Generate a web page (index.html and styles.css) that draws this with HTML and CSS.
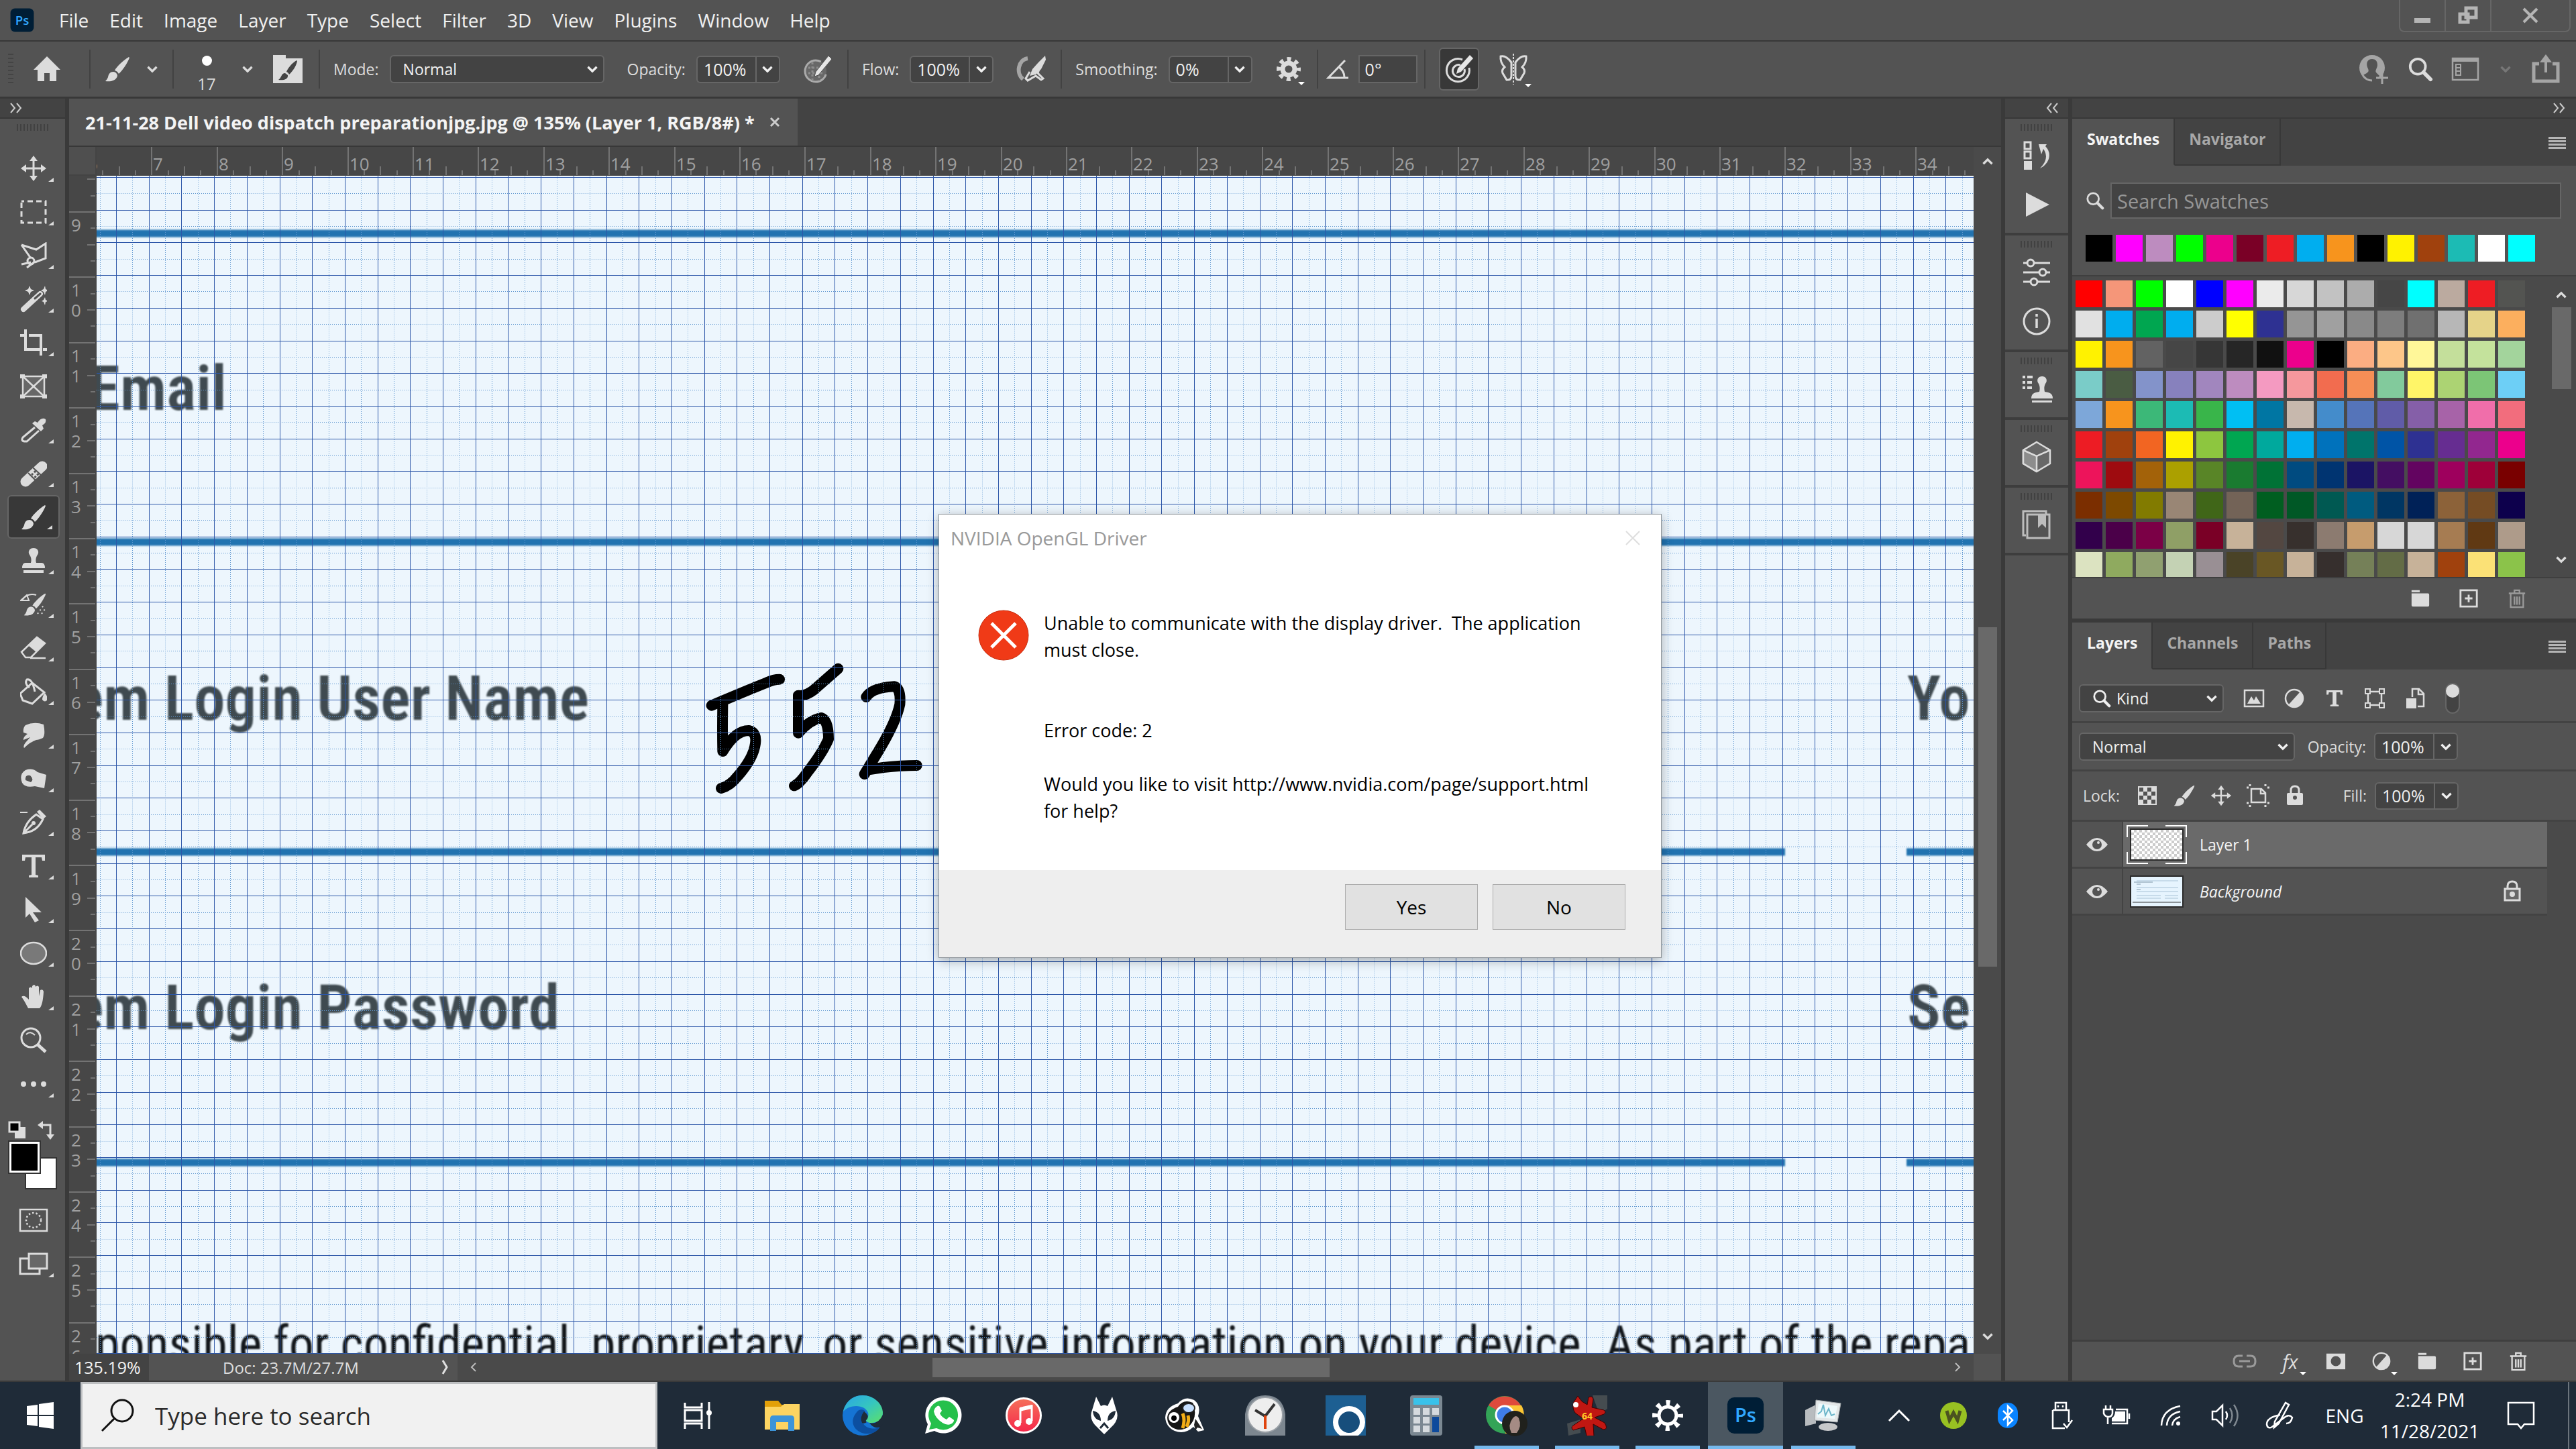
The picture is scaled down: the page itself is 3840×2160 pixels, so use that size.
FILE: index.html
```html
<!DOCTYPE html>
<html lang="en">
  <head>
    <meta charset="UTF-8" />
    <meta name="viewport" content="width=device-width, initial-scale=1.0" />
    <title>21-11-28 Dell video dispatch preparationjpg.jpg @ 135%</title>
    <link rel="stylesheet" href="styles.css">
  </head>
  <body>
    <!-- shared icons -->
    <svg class="sprite" aria-hidden="true">
      <symbol id="chevron" viewBox="0 0 22 22"><path d="M5 8l6 6 6-6" fill="none" stroke="currentColor" stroke-width="3"/></symbol>
      <symbol id="search" viewBox="0 0 40 40"><circle cx="16" cy="16" r="12" fill="none" stroke="currentColor" stroke-width="4"/><path d="M25 25l11 11" stroke="currentColor" stroke-width="6" stroke-linecap="round"/></symbol>
      <symbol id="brush" viewBox="0 0 40 40"><path d="M37 2C30 6 19 16 16 22q4 1 6 5C28 22 36 9 38 3z" fill="currentColor"/><path d="M14 24c-5 0-7 3-8 8-1 3-3 5-4 6 7 1 16 0 18-8 0-3-3-6-6-6z" fill="currentColor"/></symbol>
      <symbol id="folder" viewBox="0 0 32 32"><path d="M2 3h13v3H2zM2 8h26q2 0 2 2v17q0 2-2 2H4q-2 0-2-2z" fill="currentColor"/></symbol>
      <symbol id="plus" viewBox="0 0 32 32"><path d="M3 3h26v26H3zM16 10v12M10 16h12" fill="none" stroke="currentColor" stroke-width="3"/></symbol>
      <symbol id="trash" viewBox="0 0 32 32"><path d="M3 8h26M12 7V3h8v4M6 8v22h20V8M12 13v13M16 13v13M20 13v13" fill="none" stroke="currentColor" stroke-width="2.5"/></symbol>
      <symbol id="adjust" viewBox="0 0 32 32"><circle cx="16" cy="16" r="13" fill="none" stroke="currentColor" stroke-width="2.5"/><path d="M25 6A13 13 0 0 1 7 26z" fill="currentColor"/></symbol>
      <symbol id="move" viewBox="0 0 40 40"><path d="M20 6v28M6 20h28" stroke="currentColor" stroke-width="3"/><path d="M20 1l6 8H14zM20 39l6-8H14zM1 20l8-6v12zM39 20l-8-6v12z" fill="currentColor"/></symbol>
      <symbol id="eye" viewBox="0 0 34 24"><path d="M1 12Q9 2 17 2t16 10Q25 22 17 22T1 12z" fill="currentColor"/><circle cx="17" cy="12" r="7" fill="#535353"/><circle cx="19" cy="9" r="2" fill="currentColor"/></symbol>
      <symbol id="ps" viewBox="0 0 60 60"><rect x="1" y="1" width="58" height="58" rx="11" fill="#001e36"/><text x="30" y="41" text-anchor="middle" font-family="Open Sans, sans-serif" font-weight="600" font-size="31" fill="#31a8ff">Ps</text></symbol>
    </svg>

    <header class="menubar">
      <svg class="menubar__logo"><use href="#ps"/></svg>
      <nav class="menubar__items">
        <button>File</button><button>Edit</button><button>Image</button><button>Layer</button><button>Type</button><button>Select</button><button>Filter</button><button>3D</button><button>View</button><button>Plugins</button><button>Window</button><button>Help</button>
      </nav>
      <div class="window-controls">
        <button class="window-controls__button" aria-label="Minimize"><svg width="28" height="28"><path d="M2 18h24v7H2z" fill="#b5b5b5"/></svg></button>
        <button class="window-controls__button" aria-label="Restore"><svg width="32" height="28"><path d="M13 3h15v14H13zM4 12h12v12H4z" fill="#535353" stroke="#b5b5b5" stroke-width="5"/></svg></button>
        <button class="window-controls__button window-controls__button--wide" aria-label="Close"><svg width="28" height="24"><path d="M4 2l20 20M24 2L4 22" stroke="#b5b5b5" stroke-width="4"/></svg></button>
      </div>
    </header>

    <section class="options">
      <div class="options__group options__group--home">
        <span class="options__grip"></span>
        <button aria-label="Home"><svg width="44" height="44" viewBox="0 0 44 44"><path d="M22 3L2 23h6v17h10V28h8v12h10V23h6z" fill="#dcdcdc"/></svg></button>
      </div>
      <div class="options__group">
        <button aria-label="Brush tool"><svg width="40" height="40"><use href="#brush"/></svg></button>
        <svg class="chevron"><use href="#chevron"/></svg>
      </div>
      <div class="options__group">
        <div class="brush-size"><i class="brush-size__dot"></i><span>17</span></div>
        <svg class="chevron"><use href="#chevron"/></svg>
        <button class="options__preset" aria-label="Brush settings"><svg width="44" height="44" viewBox="0 0 44 44"><path d="M0 1h19v5h25v37H0z" fill="#dcdcdc"/><path d="M35 9c-7 4-13 12-15 17q3 1 4 4c6-5 11-14 12-20z" fill="#444"/><path d="M18 28c-6 0-5 7-10 10 6 1 15 0 14-7z" fill="#444"/></svg></button>
      </div>
      <div class="options__group options__group--fields">
        <div class="field"><label for="mode">Mode:</label>
          <div class="select select--mode"><select id="mode"><option>Normal</option></select><svg class="chevron"><use href="#chevron"/></svg></div></div>
        <div class="field"><label for="opacity">Opacity:</label>
          <div class="combo"><input id="opacity" type="text" value="100%"><button aria-label="Opacity slider"><svg class="chevron"><use href="#chevron"/></svg></button></div></div>
        <button aria-label="Pressure for opacity"><svg width="44" height="44" viewBox="0 0 44 44"><circle cx="19" cy="25" r="16" fill="#686868" stroke="#aaa" stroke-width="3" stroke-dasharray="78 23" stroke-dashoffset="-5"/><path d="M8 20h22M8 28h22M14 12v26M24 20v20" stroke="#8d8d8d" stroke-width="3" stroke-dasharray="3 3"/><path d="M38 2l5 5-20 24-6 2 2-7z" fill="#e6e6e6" stroke="#535353"/></svg></button>
      </div>
      <div class="options__group options__group--fields">
        <div class="field"><label for="flow">Flow:</label>
          <div class="combo"><input id="flow" type="text" value="100%"><button aria-label="Flow slider"><svg class="chevron"><use href="#chevron"/></svg></button></div></div>
        <button aria-label="Airbrush"><svg width="44" height="44" viewBox="0 0 44 44"><path d="M17 6C3 8-1 28 10 37" fill="none" stroke="#a5a5a5" stroke-width="6"/><path d="M34 22l-2 6 8 8-3 2-8-6-12 7-3-3 6-10" fill="none" stroke="#dcdcdc" stroke-width="3"/><path d="M43 2l1 6-7 14-8 8-9 2 4-10 9-10z" fill="#dcdcdc"/></svg></button>
      </div>
      <div class="options__group options__group--fields">
        <div class="field"><label for="smoothing">Smoothing:</label>
          <div class="combo"><input id="smoothing" type="text" value="0%"><button aria-label="Smoothing slider"><svg class="chevron"><use href="#chevron"/></svg></button></div></div>
        <button class="has-menu" aria-label="Smoothing options"><svg width="40" height="40" viewBox="0 0 40 40"><circle cx="20" cy="20" r="9" fill="none" stroke="#dcdcdc" stroke-width="7"/><circle cx="20" cy="20" r="15" fill="none" stroke="#dcdcdc" stroke-width="6" stroke-dasharray="6 5.8" stroke-dashoffset="3"/></svg></button>
      </div>
      <div class="options__group options__group--angle">
        <svg width="36" height="36" viewBox="0 0 36 36"><path d="M28 5L3 31h30M19 15q8 6 8 15" fill="none" stroke="#dcdcdc" stroke-width="3"/></svg>
        <input class="angle" type="text" value="0°" aria-label="Brush angle">
      </div>
      <div class="options__group options__group--last">
        <button class="options__active" aria-label="Pressure for size"><svg width="44" height="44" viewBox="0 0 44 44"><path d="M27 8A17 17 0 1 0 37 20M24 16a9 9 0 1 0 6 6" fill="none" stroke="#dcdcdc" stroke-width="3"/><path d="M38 1l5 5-18 20-7 3 2-8z" fill="#e6e6e6"/></svg></button>
        <button class="has-menu" aria-label="Symmetry"><svg width="46" height="46" viewBox="0 0 46 46"><path d="M20 13Q12 2 4 4q-1 9 6 16-5 4-3 9l6 10q7 1 7-6zM26 13Q34 2 42 4q1 9-6 16 5 4 3 9l-6 10q-7 1-7-6z" fill="none" stroke="#dcdcdc" stroke-width="3"/><path d="M23 0v46" stroke="#dcdcdc" stroke-width="2" stroke-dasharray="3 2"/></svg></button>
      </div>
      <div class="options__right">
        <button aria-label="Invite"><svg width="46" height="46" viewBox="0 0 46 46"><circle cx="20" cy="21" r="19" fill="#a5a5a5"/><path d="M20 8c-7 0-9 6-7 12 2 5 3 6-1 9l-7 4 4 8 16 4 6-12-5-5c-2-3 2-7 2-11 0-6-3-9-8-9z" fill="#535353"/><path d="M20 40q-9 0-14-8" fill="none" stroke="#a5a5a5" stroke-width="3"/><path d="M35 27v18M26 36h18" stroke="#a5a5a5" stroke-width="3"/></svg></button>
        <button aria-label="Search"><svg width="38" height="38"><use href="#search"/></svg></button>
        <button aria-label="Workspace"><svg width="42" height="36" viewBox="0 0 42 36"><path d="M2 2h38v32H2z" fill="none" stroke="#a5a5a5" stroke-width="2.5"/><path d="M1 1h40v6H1z" fill="#a5a5a5"/><path d="M7 11h7v16H7zM7 16h7M7 21h7" fill="none" stroke="#a5a5a5" stroke-width="2"/></svg></button>
        <svg class="chevron chevron--dim"><use href="#chevron"/></svg>
        <button aria-label="Share"><svg width="42" height="44" viewBox="0 0 42 44"><path d="M11 14H3v26h36V14h-8" fill="none" stroke="#a5a5a5" stroke-width="5"/><path d="M21 27V8" stroke="#a5a5a5" stroke-width="4"/><path d="M21 0l9 12H12z" fill="#a5a5a5"/></svg></button>
      </div>
    </section>

    <main class="workspace">
      <aside class="toolbox">
        <div class="dock-head dock-head--left"><svg width="22" height="18" viewBox="0 0 22 18"><path d="M3 2l6 7-6 7M12 2l6 7-6 7" fill="none" stroke="#ccc" stroke-width="2"/></svg></div>
        <div class="grip"></div>
        <div class="toolbox__tools">
          <button class="tool" aria-label="Move"><svg class="tool__icon"><use href="#move"/></svg></button>
          <button class="tool" aria-label="Marquee"><svg class="tool__icon" viewBox="0 0 40 40"><rect x="2" y="4" width="36" height="32" fill="none" stroke="currentColor" stroke-width="3" stroke-dasharray="8 5" stroke-dashoffset="4"/></svg></button>
          <button class="tool" aria-label="Lasso"><svg class="tool__icon" viewBox="0 0 40 40"><path d="M2 4l22 7L38 2v22l-16 6M2 4l14 20M2 33l14-3M10 38l12-9" fill="none" stroke="currentColor" stroke-width="3"/><circle cx="16" cy="28" r="5" fill="none" stroke="currentColor" stroke-width="3"/></svg></button>
          <button class="tool" aria-label="Magic wand"><svg class="tool__icon" viewBox="0 0 40 40"><path d="M5 35L30 12" stroke="currentColor" stroke-width="8" stroke-linecap="round"/><path d="M22 19l8-7" stroke="#535353" stroke-width="3" stroke-linecap="round"/><path d="M14 0l2 5 5 2-5 2-2 5-2-5-5-2 5-2zM37 0l1 5 4 2-4 2-1 5-2-5-4-2 4-2zM37 17l1 4 4 2-4 1-1 5-2-5-3-1 3-2z" fill="currentColor"/></svg></button>
          <button class="tool" aria-label="Crop"><svg class="tool__icon" viewBox="0 0 40 40"><path d="M0 9h6M8 0v30h22M13 9h18v30M34 30h8" fill="none" stroke="currentColor" stroke-width="4"/></svg></button>
          <button class="tool tool--plain" aria-label="Frame"><svg class="tool__icon" viewBox="0 0 40 40"><path d="M4 5h32v30H4zM4 5l32 30M36 5L4 35" fill="#686868" stroke="currentColor" stroke-width="2.5"/><path d="M0 2h7v6H0zM33 2h7v6h-7zM0 32h7v6H0zM33 32h7v6h-7z" fill="currentColor"/></svg></button>
          <button class="tool" aria-label="Eyedropper"><svg class="tool__icon" viewBox="0 0 40 40"><path d="M22 16L4 31q-3 5 2 6h4l18-16" fill="none" stroke="currentColor" stroke-width="3"/><path d="M18 10l4-3 4 2q6-9 12-5 2 5-5 9l2 5-4 4z" fill="currentColor"/></svg></button>
          <button class="tool" aria-label="Healing brush"><svg class="tool__icon" viewBox="0 0 40 40"><path d="M8 32L33 9" stroke="currentColor" stroke-width="15" stroke-linecap="round"/><path d="M12 19l12 12M19 11l13 12" stroke="#535353" stroke-width="2"/><path d="M17 20l9 8M21 16l8 8" stroke="#535353" stroke-width="3" stroke-dasharray="3 3"/></svg></button>
          <button class="tool tool--active" aria-label="Brush"><svg class="tool__icon"><use href="#brush"/></svg></button>
          <button class="tool" aria-label="Clone stamp"><svg class="tool__icon" viewBox="0 0 40 40"><path d="M20 1c-6 0-9 5-6 10 3 4 3 9 2 12H8q-5 0-5 8h34q0-8-5-8h-8c-1-3-1-8 2-12 3-5 0-10-6-10zM5 34h30v4H5z" fill="currentColor"/></svg></button>
          <button class="tool" aria-label="History brush"><svg class="tool__icon"><use href="#brush" x="4" y="2" width="36" height="36"/><path d="M3 13Q12 2 24 6M1 14l9-8 3 8z" fill="none" stroke="currentColor" stroke-width="2"/><path d="M26 34l10-14M32 34l5-7" stroke="currentColor" stroke-width="2" stroke-dasharray="2 4"/></svg></button>
          <button class="tool" aria-label="Eraser"><svg class="tool__icon" viewBox="0 0 40 40"><path d="M2 26L25 4l12 9-21 21H8z" fill="none" stroke="currentColor" stroke-width="2.5"/><path d="M13 17L25 4l12 9-13 13z" fill="currentColor"/><path d="M15 35h23" stroke="currentColor" stroke-width="2.5"/></svg></button>
          <button class="tool" aria-label="Paint bucket"><svg class="tool__icon" viewBox="0 0 40 40"><path d="M0 23L18 7l18 14-18 17-14-5zM22 20Q18 0 10 2q-4 6 4 12" fill="none" stroke="currentColor" stroke-width="3"/><path d="M37 22q5 7 4 10-4 5-8 0 0-5 4-10z" fill="currentColor"/></svg></button>
          <button class="tool" aria-label="Smudge"><svg class="tool__icon" viewBox="0 0 40 40"><path d="M8 5q13-6 27-1 3 15-1 20-6 3-10 3-9 3-18 12-2-3 2-8l7-8-10 4q-1-4 6-9l-6-2q-1-7 3-11z" fill="currentColor"/></svg></button>
          <button class="tool" aria-label="Burn"><svg class="tool__icon" viewBox="0 0 40 40"><path d="M3 26Q-2 13 8 7q10-4 18 3l13 4-3 20-14-3q-14 3-19-5z" fill="currentColor"/><path d="M8 22q-1-9 7-7 6 6 1 10z" fill="#535353"/></svg></button>
          <button class="tool" aria-label="Pen"><svg class="tool__icon" viewBox="0 0 40 40"><path d="M5 36q3-17 19-28l10 7q-8 17-24 20zM5 36l13-13" fill="none" stroke="currentColor" stroke-width="3"/><circle cx="20" cy="21" r="3" fill="currentColor"/><path d="M25 4l4-3 10 10-5 4z" fill="currentColor"/><path d="M0 5h11" stroke="currentColor" stroke-width="2"/></svg></button>
          <button class="tool" aria-label="Type"><svg class="tool__icon" viewBox="0 0 40 40"><path d="M3 3h34v9h-4l-1-5h-9v26l4 1v3H13v-3l4-1V7H8l-1 5H3z" fill="currentColor"/></svg></button>
          <button class="tool" aria-label="Path selection"><svg class="tool__icon" viewBox="0 0 40 40"><path d="M8 1l24 23H19l9 12-6 3-8-13-6 6z" fill="currentColor"/></svg></button>
          <button class="tool" aria-label="Ellipse"><svg class="tool__icon" viewBox="0 0 40 40"><ellipse cx="20" cy="20" rx="19" ry="16" fill="#797979" stroke="currentColor" stroke-width="2.5"/></svg></button>
          <button class="tool" aria-label="Hand"><svg class="tool__icon" viewBox="0 0 40 40"><path d="M12 37Q6 25 2 20q4-4 11 4V7q3-3 5 0v12V4q3-4 5 0v14V5q3-3 5 0v14l2-9q4-2 5 2-1 20-6 25z" fill="currentColor"/></svg></button>
          <button class="tool tool--plain" aria-label="Zoom"><svg class="tool__icon" viewBox="0 0 40 40"><circle cx="16" cy="16" r="14" fill="none" stroke="currentColor" stroke-width="3"/><path d="M9 11q6-6 13 1" fill="none" stroke="currentColor" stroke-width="2"/><path d="M26 26l12 11" stroke="currentColor" stroke-width="5"/></svg></button>
          <button class="tool" aria-label="More tools"><svg class="tool__icon" viewBox="0 0 40 40"><g fill="currentColor"><circle cx="5" cy="20" r="4"/><circle cx="20" cy="20" r="4"/><circle cx="35" cy="20" r="4"/></g></svg></button>
        </div>
        <svg class="toolbox__colors" viewBox="0 0 96 120">
          <path d="M22 16h16v17H22z" fill="#ddd"/><path d="M14 9h15v14H14z" fill="#000" stroke="#ddd" stroke-width="3"/>
          <path d="M62 13h13v16" fill="none" stroke="#ddd" stroke-width="3"/><path d="M56 13l8-6v12zM75 35l-6-8h12z" fill="#ddd"/>
          <path d="M38 62h46v46H38z" fill="#fff" stroke="#333" stroke-width="2"/>
          <path d="M13 37h47v48H13z" fill="#fff" stroke="#333" stroke-width="2"/><path d="M17 41h39v40H17z" fill="#000"/>
        </svg>
        <button class="tool tool--plain" aria-label="Quick mask"><svg width="44" height="36" viewBox="0 0 44 36"><path d="M2 2h40v32H2z" fill="none" stroke="currentColor" stroke-width="2.5"/><circle cx="22" cy="18" r="11" fill="none" stroke="currentColor" stroke-width="2.5" stroke-dasharray="2.5 3"/></svg></button>
        <button class="tool" aria-label="Screen mode"><svg width="44" height="36" viewBox="0 0 44 36"><path d="M14 10H2v23h29v-8" fill="none" stroke="currentColor" stroke-width="3"/><path d="M15 3h27v22H15z" fill="#686868" stroke="currentColor" stroke-width="3"/></svg></button>
      </aside>

      <section class="document">
        <div class="document__tabs">
          <div class="document__tab"><span>21-11-28 Dell video dispatch preparationjpg.jpg @ 135% (Layer 1, RGB/8#) *</span>
            <button aria-label="Close document"><svg width="16" height="16"><path d="M2 2l12 12M14 2L2 14" stroke="#ccc" stroke-width="3"/></svg></button></div>
        </div>
        <div class="document__body">
          <div class="ruler-corner"></div>
          <svg class="ruler ruler--top" id="ruler-top"></svg>
          <div class="scroll-up"><svg class="chevron chevron--up"><use href="#chevron"/></svg></div>
          <svg class="ruler ruler--left" id="ruler-left"></svg>
          <svg class="canvas">
            <g transform="translate(-144 -262)">
              <g class="canvas__rules">
                <path d="M134 348H2960M134 808H2960M134 1270H2661M2842 1270H2960M134 1733H2661M2842 1733H2960"/>
              </g>
              <g class="canvas__heading">
                <text x="338" y="611" text-anchor="end">Email</text>
                <text x="878" y="1073" text-anchor="end">em Login User Name</text>
                <text x="834" y="1534" text-anchor="end">em Login Password</text>
                <text x="2843" y="1073">Yo</text>
                <text x="2843" y="1534">Se</text>
              </g>
              <text class="canvas__body" x="142" y="2029">ponsible for confidential, proprietary, or sensitive information on your device. As part of the repa</text>
              <svg x="1000" y="940" width="460" height="300" viewBox="0 0 1380 900">
                <g class="canvas__ink">
                  <path d="M182 335Q330 272 430 232 460 218 486 218M232 330Q230 450 232 540 290 445 350 447 385 455 378 505 370 570 300 650 265 695 225 705"/>
                  <path d="M570 290Q600 295 640 265L748 170M570 290V458Q620 400 672 390 705 400 705 485 680 545 610 635 575 685 552 694"/>
                  <path d="M874 297Q900 255 1000 250 1030 260 1024 330 1010 400 940 520L866 642M885 622L950 612Q1030 603 1100 603"/>
                </g>
              </svg>
              <g id="grid"></g>
            </g>
          </svg>
          <div class="vscroll"><div class="vscroll__thumb"></div><svg class="chevron"><use href="#chevron"/></svg></div>
        </div>
        <footer class="status">
          <span class="status__zoom">135.19%</span>
          <span class="status__doc"><span>Doc: 23.7M/27.7M</span><svg width="12" height="24"><path d="M2 2l6 10-6 10" fill="none" stroke="#e0e0e0" stroke-width="3"/></svg></span>
          <div class="hscroll">
            <svg width="12" height="18"><path d="M9 3L3 9l6 6" fill="none" stroke="#bbb" stroke-width="2"/></svg>
            <div class="hscroll__thumb"></div>
            <svg width="12" height="18"><path d="M3 3l6 6-6 6" fill="none" stroke="#bbb" stroke-width="2"/></svg>
          </div>
          <span class="status__end"></span>
        </footer>
      </section>

      <aside class="dock">
        <div class="dock-head dock-head--center"><svg width="22" height="18" viewBox="0 0 22 18"><path d="M9 2L3 9l6 7M18 2l-6 7 6 7" fill="none" stroke="#ccc" stroke-width="2"/></svg></div>
        <div class="dock__group">
          <div class="grip"></div>
          <button class="dock__button" aria-label="History"><svg width="44" height="48" viewBox="0 0 44 48"><path d="M4 4h9v10H4zM4 18h9v10H4z" fill="none" stroke="#dcdcdc" stroke-width="3"/><path d="M3 32h12v13H3z" fill="#dcdcdc"/><path d="M25 7h12l-2 3q8 8 5 19-3 9-13 14 15-15 5-29l-3 8z" fill="#dcdcdc"/></svg></button>
          <button class="dock__button" aria-label="Actions"><svg width="40" height="40" viewBox="0 0 40 40"><path d="M4 2l35 18L4 38z" fill="#dcdcdc"/></svg></button>
        </div>
        <div class="dock__group">
          <div class="grip"></div>
          <button class="dock__button" aria-label="Properties"><svg width="44" height="44" viewBox="0 0 44 44"><path d="M2 8h40M2 22h40M2 36h40" stroke="#dcdcdc" stroke-width="3"/><g fill="#535353" stroke="#dcdcdc" stroke-width="3"><circle cx="13" cy="8" r="5"/><circle cx="31" cy="22" r="5"/><circle cx="18" cy="36" r="5"/></g></svg></button>
          <button class="dock__button" aria-label="Info"><svg width="44" height="44" viewBox="0 0 44 44"><circle cx="22" cy="22" r="19" fill="none" stroke="#dcdcdc" stroke-width="3"/><path d="M22 18v14M22 11v4" stroke="#dcdcdc" stroke-width="3.5"/></svg></button>
        </div>
        <div class="dock__group">
          <div class="grip"></div>
          <button class="dock__button" aria-label="Clone source"><svg width="48" height="44" viewBox="0 0 48 44"><path d="M3 4h4M10 4h8M3 12h4M10 12h7M3 20h4M10 20h7" stroke="#dcdcdc" stroke-width="4"/><path d="M32 3c-6 0-9 6-5 11 2 4 2 8 1 12-8 1-12 3-12 10h32c0-7-4-9-12-10-1-4-1-8 1-12 4-5 1-11-5-11zM17 39h30v3H17z" fill="#dcdcdc"/></svg></button>
        </div>
        <div class="dock__group">
          <div class="grip"></div>
          <button class="dock__button" aria-label="3D"><svg width="44" height="48" viewBox="0 0 44 48"><path d="M22 2l20 12v20L22 46 2 34V14z" fill="#686868" stroke="#dcdcdc" stroke-width="2.5"/><path d="M2 14l20 9v23L2 34z" fill="#8d8d8d"/><path d="M2 14l20 9 20-9M22 23v23M2 14v20l20 12" fill="none" stroke="#dcdcdc" stroke-width="2.5"/></svg></button>
        </div>
        <div class="dock__group">
          <div class="grip"></div>
          <button class="dock__button" aria-label="Libraries"><svg width="44" height="44" viewBox="0 0 44 44"><path d="M36 6V2H2v36h4M8 7h33v35H8z" fill="none" stroke="#bdbdbd" stroke-width="3"/><path d="M24 7h12v20l-6-6-6 6z" fill="#bdbdbd"/></svg></button>
        </div>
      </aside>

      <aside class="panels">
        <div class="dock-head dock-head--right"><svg width="22" height="18" viewBox="0 0 22 18"><path d="M3 2l6 7-6 7M12 2l6 7-6 7" fill="none" stroke="#ccc" stroke-width="2"/></svg></div>
        <section class="panel panel--swatches">
          <div class="tabs">
            <button class="tabs__tab tabs__tab--active">Swatches</button><button class="tabs__tab">Navigator</button>
            <button class="tabs__menu" aria-label="Panel menu"></button>
          </div>
          <div class="swatch-search">
            <label for="swatch-search" aria-label="Search Swatches"><svg width="28" height="28"><use href="#search"/></svg></label>
            <input id="swatch-search" type="text" placeholder="Search Swatches">
          </div>
          <div class="recent" id="recent"></div>
          <div class="swatches">
            <div class="swatches__grid" id="swatches"></div>
            <div class="swatches__scroll"><svg class="chevron chevron--up"><use href="#chevron"/></svg><div class="swatches__thumb"></div><svg class="chevron"><use href="#chevron"/></svg></div>
          </div>
          <div class="swatch-footer">
            <button aria-label="New group"><svg class="icon"><use href="#folder"/></svg></button>
            <button aria-label="New swatch"><svg class="icon"><use href="#plus"/></svg></button>
            <button class="is-dim" aria-label="Delete swatch"><svg class="icon"><use href="#trash"/></svg></button>
          </div>
        </section>

        <section class="panel panel--layers">
          <div class="tabs">
            <button class="tabs__tab tabs__tab--active">Layers</button><button class="tabs__tab">Channels</button><button class="tabs__tab">Paths</button>
            <button class="tabs__menu" aria-label="Panel menu"></button>
          </div>
          <div class="layer-row layer-row--filter">
            <div class="select select--kind"><svg class="select__search"><use href="#search"/></svg><select aria-label="Filter type"><option>Kind</option></select><svg class="chevron"><use href="#chevron"/></svg></div>
            <div class="filters">
              <button aria-label="Pixel layers"><svg width="32" height="28" viewBox="0 0 32 28"><path d="M2 2h28v24H2z" fill="none" stroke="currentColor" stroke-width="2.5"/><path d="M6 22l6-11 4 6 3-6 7 11z" fill="currentColor"/></svg></button>
              <button aria-label="Adjustment layers"><svg width="32" height="32"><use href="#adjust"/></svg></button>
              <button aria-label="Type layers"><svg width="28" height="28" viewBox="0 0 40 40"><path d="M3 3h34v9h-4l-1-5h-8v26l5 1v3H11v-3l5-1V7H8l-1 5H3z" fill="currentColor"/></svg></button>
              <button aria-label="Shape layers"><svg width="32" height="32" viewBox="0 0 32 32"><path d="M6 6h20v20H6z" fill="none" stroke="currentColor" stroke-width="2.5"/><path d="M2 2h7v7H2zM23 2h7v7h-7zM2 23h7v7H2zM23 23h7v7h-7z" fill="#535353" stroke="currentColor" stroke-width="2"/></svg></button>
              <button aria-label="Smart objects"><svg width="32" height="32" viewBox="0 0 32 32"><path d="M12 14V2h10l7 7v19H20M21 2v8h8" fill="none" stroke="currentColor" stroke-width="2.5"/><path d="M3 16h15v15H3z" fill="currentColor"/></svg></button>
            </div>
            <label class="toggle"><input type="checkbox" aria-label="Layer filtering"></label>
          </div>
          <div class="layer-row">
            <div class="select select--blend"><select aria-label="Blend mode"><option>Normal</option></select><svg class="chevron"><use href="#chevron"/></svg></div>
            <div class="field field--panel"><label for="layer-opacity">Opacity:</label>
              <div class="combo"><input id="layer-opacity" type="text" value="100%"><button aria-label="Layer opacity slider"><svg class="chevron"><use href="#chevron"/></svg></button></div></div>
          </div>
          <div class="layer-row layer-row--lock">
            <span>Lock:</span>
            <div class="locks">
              <button aria-label="Lock transparency"><svg width="28" height="28" viewBox="0 0 28 28"><path d="M1 1h26v26H1z" fill="none" stroke="currentColor" stroke-width="2"/><path d="M8 1h6v7H8zM20 1h7v7h-7zM1 8h7v6H1zM14 8h6v6h-6zM8 14h6v6H8zM20 14h7v6h-7zM1 20h7v7H1zM14 20h6v7h-6z" fill="currentColor"/></svg></button>
              <button aria-label="Lock pixels"><svg width="34" height="34"><use href="#brush"/></svg></button>
              <button aria-label="Lock position"><svg width="32" height="32"><use href="#move"/></svg></button>
              <button aria-label="Lock artboards"><svg width="34" height="34" viewBox="0 0 34 34"><path d="M7 7h15l6 6v14H7zM21 7v7h7" fill="none" stroke="currentColor" stroke-width="2.5"/><path d="M5 0v3M28 0v3M0 5h3M31 5h3M5 31v3M28 31v3M0 28h3M31 28h3" stroke="currentColor" stroke-width="3"/></svg></button>
              <button aria-label="Lock all"><svg width="26" height="32" viewBox="0 0 26 32"><path d="M7 13V8q0-6 6-6t6 6v5" fill="none" stroke="currentColor" stroke-width="3"/><rect x="1" y="12" width="24" height="18" rx="2" fill="currentColor"/><circle cx="13" cy="19" r="3" fill="#535353"/></svg></button>
            </div>
            <div class="field field--panel"><label for="fill">Fill:</label>
              <div class="combo"><input id="fill" type="text" value="100%"><button aria-label="Fill slider"><svg class="chevron"><use href="#chevron"/></svg></button></div></div>
          </div>
          <ul class="layers">
            <li class="layer layer--active">
              <button class="layer__eye" aria-label="Toggle Layer 1"><svg width="34" height="24"><use href="#eye"/></svg></button>
              <div class="layer__main"><div class="layer__frame"><div class="layer__thumb layer__thumb--empty"></div></div><span>Layer 1</span></div>
            </li>
            <li class="layer">
              <button class="layer__eye" aria-label="Toggle Background"><svg width="34" height="24"><use href="#eye"/></svg></button>
              <div class="layer__main">
                <div class="layer__frame"><svg class="layer__thumb" viewBox="0 0 76 44"><path d="M0 0h76v44H0z" fill="#e6f4fe"/><path d="M8 6h62M8 16h62M8 22h62M8 28h36M50 28h20M8 32h36M50 32h20" stroke="#a9c3d6"/><path d="M4 8h28M8 11h6M8 19h6" stroke="#7f96a8"/><path d="M2 38h72" stroke="#333"/></svg></div>
                <em>Background</em>
                <svg class="layer__lock" width="28" height="34" viewBox="0 0 28 34"><path d="M7 14V9q0-7 7-7t7 7v5" fill="none" stroke="#dcdcdc" stroke-width="3"/><path d="M3 13h22v17H3z" fill="#686868" stroke="#dcdcdc" stroke-width="3"/><circle cx="14" cy="21" r="4" fill="#dcdcdc"/></svg>
              </div>
            </li>
          </ul>
          <div class="layer-footer">
            <button class="is-dim" aria-label="Link layers"><svg width="36" height="24" viewBox="0 0 36 24"><path d="M15 4H9q-7 0-7 8t7 8h6M21 4h6q7 0 7 8t-7 8h-6M10 12h16" fill="none" stroke="currentColor" stroke-width="3"/></svg></button>
            <button class="has-menu fx" aria-label="Layer style">fx</button>
            <button aria-label="Add mask"><svg class="icon" viewBox="0 0 32 32"><path d="M1 4h30v25H1z" fill="currentColor"/><circle cx="16" cy="16" r="8" fill="#535353"/></svg></button>
            <button class="has-menu" aria-label="New adjustment"><svg class="icon"><use href="#adjust"/></svg></button>
            <button aria-label="New group"><svg class="icon"><use href="#folder"/></svg></button>
            <button aria-label="New layer"><svg class="icon"><use href="#plus"/></svg></button>
            <button aria-label="Delete layer"><svg class="icon"><use href="#trash"/></svg></button>
          </div>
        </section>
      </aside>
    </main>

    <footer class="taskbar">
      <button class="taskbar__start" aria-label="Start"><svg width="40" height="40" viewBox="0 0 40 40"><path d="M0 6l16-2v15H0zM18 3l22-3v19H18zM0 21h16v15L0 34zM18 21h22v19l-22-3z" fill="#fff"/></svg></button>
      <div class="taskbar__search">
        <label for="task-search" aria-label="Search"><svg width="50" height="50" viewBox="0 0 50 50"><circle cx="31" cy="18" r="16" fill="none" stroke="#111" stroke-width="3"/><path d="M20 29L1 48" stroke="#111" stroke-width="3"/></svg></label>
        <input id="task-search" type="text" placeholder="Type here to search">
      </div>
      <div class="taskbar__apps">
        <button class="app" aria-label="Task View"><svg width="42" height="42" viewBox="0 0 42 42"><path d="M2 2v7h25V2M2 13h25v16H2zM2 41v-8h25v8M38 1v40" fill="none" stroke="#fff" stroke-width="3"/><circle cx="38" cy="17" r="4" fill="#fff"/></svg></button>
        <button class="app" aria-label="File Explorer"><svg width="60" height="60" viewBox="0 0 60 60"><path d="M4 8h20l5 6h27v14H4z" fill="#e3a008"/><path d="M4 17h24l5-4h23v38H4z" fill="#fcd462"/><path d="M12 53V35q0-5 5-5h26q5 0 5 5v18h-9V40H21v13z" fill="#3c94d9"/></svg></button>
        <button class="app" aria-label="Edge"><svg width="60" height="60" viewBox="0 0 60 60"><defs><linearGradient id="edge-a" x1="0" y1="0" x2="1" y2="1"><stop offset="0" stop-color="#2aa5e6"/><stop offset=".5" stop-color="#35c5c0"/><stop offset="1" stop-color="#5ce06a"/></linearGradient></defs><circle cx="30" cy="30" r="30" fill="#1574d4"/><path d="M1 24C5 8 16 0 30 0c17 0 30 13 30 26 0 10-8 15-17 15-5 0-8-2-8-4 3-3 4-7 3-11C34 14 12 12 1 24z" fill="url(#edge-a)"/><path d="M22 24C4 44 26 62 45 56c6-2 9-6 11-9 0 0-8 5-18 1-8-3-13-14-4-24-4-4-9-3-12 0z" fill="#0c4fa0"/><path d="M32 24q-7 9-3 17 3 2 7-1-3-2 1-5 3-5-5-11z" fill="#1f2b38"/><path d="M40 41q13 3 20-12v14l-4 4q-9 4-16-6z" fill="#1f2b38"/></svg></button>
        <button class="app" aria-label="WhatsApp"><svg width="56" height="56" viewBox="0 0 56 56"><path d="M1 55l4-14A27 27 0 1 1 15 51z" fill="#fff"/><path d="M7 49l3-9a22 22 0 1 1 8 7z" fill="#25c04b"/><path d="M18 15q3-3 5 0l3 6-3 4q3 6 10 9l4-4 6 4q2 1 0 4-6 7-16 1-11-7-13-17 1-5 4-7z" fill="#fff"/></svg></button>
        <button class="app" aria-label="iTunes"><svg width="54" height="54" viewBox="0 0 54 54"><defs><linearGradient id="music" x1="0" y1="0" x2="0" y2="1"><stop offset="0" stop-color="#f5705a"/><stop offset="1" stop-color="#f5264a"/></linearGradient></defs><circle cx="27" cy="27" r="25.500" fill="url(#music)" stroke="#fff" stroke-width="3"/><path d="M22 38V17l17-4v22" fill="none" stroke="#fff" stroke-width="3"/><path d="M21 15l18-4v6l-18 4z" fill="#fff"/><circle cx="18" cy="39" r="5" fill="#fff"/><circle cx="35" cy="36" r="5" fill="#fff"/></svg></button>
        <button class="app" aria-label="foobar2000"><svg width="44" height="56" viewBox="0 0 44 56"><path d="M10 0l7 14q5-3 10 0l7-14 6 20q6 14-9 27l-9 9-9-9Q-2 34 4 20z" fill="#fff"/><path d="M5 21q12 2 12 15Q6 34 5 21zM39 21q-12 2-12 15 11-2 12-15z" fill="#1f2b38"/><path d="M16 47l6-7 6 7" fill="none" stroke="#1f2b38" stroke-width="3"/></svg></button>
        <button class="app" aria-label="Bee"><svg width="60" height="54" viewBox="0 0 60 54"><path d="M1 30Q2 14 20 9 30-3 44 4q11 8 6 24l9 21-9 2-7-7Q30 56 15 50 2 44 1 30z" fill="#fff"/><path d="M4 30q1-11 16-16Q28 2 42 8q6 14 1 26-8 16-24 14Q4 44 4 30z" fill="#161616"/><circle cx="14" cy="30" r="8" fill="#fff"/><circle cx="14" cy="31" r="4"/><path d="M27 24q4 10 0 22M35 27q2 8-2 17" stroke="#f3ad16" stroke-width="5" fill="none"/><ellipse cx="36" cy="16" rx="9" ry="7" fill="#c8e0ff" stroke="#222" stroke-width="2"/><path d="M46 32l10 15-7-2-3 4-2-8z" fill="#222"/></svg></button>
        <button class="app" aria-label="Clock"><svg width="60" height="60" viewBox="0 0 60 60"><path d="M0 60V28Q4 0 30 0t30 28v32z" fill="#7d8790"/><circle cx="30" cy="29" r="26" fill="#eee" stroke="#9aa0a6" stroke-width="2"/><path d="M15 22l15 9L44 13" fill="none" stroke="#333" stroke-width="4"/><path d="M30 30v20" stroke="#e0440e" stroke-width="4"/></svg></button>
        <button class="app" aria-label="O"><svg class="app__clip" width="60" height="60" viewBox="0 0 60 60"><path d="M0 0h60v60H0z" fill="#1d5f92"/><circle cx="35" cy="40" r="20" fill="#174e7c" stroke="#fff" stroke-width="8"/></svg></button>
        <button class="app" aria-label="Calculator"><svg width="48" height="60" viewBox="0 0 48 60"><rect width="48" height="60" rx="4" fill="#7b8892"/><path d="M5 4h38v10H5z" fill="#39c2ea"/><path d="M5 19h10v10H5zM19 19h10v10H19zM33 19h10v10H33zM5 32h10v10H5zM19 32h10v10H19zM5 45h10v10H5zM19 45h10v10H19z" fill="#d5dade"/><path d="M33 32h10v23H33z" fill="#0d4a9c"/></svg></button>
        <button class="app app--open" aria-label="Chrome"><svg width="64" height="64" viewBox="0 0 64 64"><circle cx="29" cy="31" r="28" fill="#33a457"/><path d="M5 17a28 28 0 0 1 48 0H29v14z" fill="#df4a3c"/><path d="M29 17h25a28 28 0 0 1-24 42z" fill="#fbc634"/><circle cx="29" cy="31" r="13" fill="#3f7de8" stroke="#fff" stroke-width="3"/><circle cx="44" cy="44" r="19" fill="#20211c"/><path d="M39 58q-6-12 2-22 5-6 9 0 5 12-3 22z" fill="#a58b84"/></svg></button>
        <button class="app app--open" aria-label="IrfanView"><svg width="60" height="60" viewBox="0 0 60 60"><path d="M38 0h22v20L48 28zM0 42l20-6v20L2 60z" fill="#454c50"/><path d="M10 10l6-9 6 8 8 5 2-11q6-3 7 3l-2 12 18 4q4 3 0 6l-14 5 15 8q6 10-2 10l-15-8 1 18q-4 9-9 7l-5-21-17 5q-4-4 0-7l15-10-12-9q-5-7-2-16z" fill="#c01712" stroke="#400" stroke-width="1"/><circle cx="13" cy="14" r="4" fill="#fff"/><text x="22" y="36" font-size="14" font-family="Open Sans, sans-serif" font-weight="700" fill="#ffc828">64</text></svg></button>
        <button class="app app--open" aria-label="Settings"><svg width="46" height="46" viewBox="0 0 46 46"><circle cx="23" cy="23" r="13" fill="none" stroke="#fff" stroke-width="5"/><circle cx="23" cy="23" r="19" fill="none" stroke="#fff" stroke-width="8" stroke-dasharray="6 8.920" stroke-dashoffset="3"/></svg></button>
        <button class="app app--open app--active" aria-label="Photoshop"><svg width="56" height="56"><use href="#ps"/></svg></button>
        <button class="app app--open" aria-label="Display"><svg width="54" height="48" viewBox="0 0 54 48"><path d="M0 16l16-8v28L0 40z" fill="#b8bcbf"/><path d="M16 1l37 5-5 28-34-3z" fill="#e3e7e8" stroke="#a0a5a8"/><path d="M20 6l28 4-4 19-27-2z" fill="#eef9fb"/><path d="M19 22l5-4 3-10 3 16 5-10 4 10 5-2" fill="none" stroke="#6bb5c9" stroke-width="2"/><ellipse cx="34" cy="41" rx="14" ry="6" fill="#c6c8ca"/></svg></button>
      </div>
      <div class="tray">
        <button class="tray__icon" aria-label="Hidden icons"><svg width="34" height="20"><path d="M2 18L17 3l15 15" fill="none" stroke="#fff" stroke-width="3"/></svg></button>
        <button class="tray__icon" aria-label="Webroot"><svg width="40" height="40" viewBox="0 0 40 40"><circle cx="20" cy="20" r="20" fill="#98c122"/><path d="M10 13l4 14 6-11 6 11 4-14" fill="none" stroke="#4b5320" stroke-width="5"/></svg></button>
        <button class="tray__icon" aria-label="Bluetooth"><svg width="30" height="38" viewBox="0 0 30 38"><rect width="30" height="38" rx="15" fill="#0a84ff"/><path d="M8 12l14 14-7 7V5l7 7L8 26" fill="none" stroke="#fff" stroke-width="2.500"/></svg></button>
        <button class="tray__icon" aria-label="USB"><svg width="34" height="42" viewBox="0 0 34 42"><path d="M7 13V2h16v11M3 13h24v18M3 13v27h18M19 33l5 6 8-11M11 6v3M18 6v3" fill="none" stroke="#fff" stroke-width="2.500"/></svg></button>
        <button class="tray__icon" aria-label="Battery"><svg width="42" height="30" viewBox="0 0 42 30"><path d="M5 0v6M12 0v6M2 6h13v6q-1 5-6 5t-7-5zM8 17v11M20 6h17v21H14M40 12v8" fill="none" stroke="#fff" stroke-width="2.500"/><path d="M19 9h15v15H14v-5q5-3 5-10z" fill="#fff"/></svg></button>
        <button class="tray__icon" aria-label="Wi-Fi"><svg width="32" height="32" viewBox="0 0 32 32"><path d="M2 31Q3 7 30 2M10 31Q11 14 30 10M18 31q1-10 12-13" fill="none" stroke="#fff" stroke-width="2.500"/><circle cx="27" cy="28" r="3" fill="#fff"/></svg></button>
        <button class="tray__icon" aria-label="Volume"><svg width="42" height="36" viewBox="0 0 42 36"><path d="M2 12h6l9-9v30l-9-9H2z" fill="none" stroke="#fff" stroke-width="2.500"/><path d="M22 12q4 6 0 12" fill="none" stroke="#fff" stroke-width="2.500"/><path d="M28 7q7 11 0 22M34 2q11 16 0 32" fill="none" stroke="#7f8890" stroke-width="2.500"/></svg></button>
        <button class="tray__icon" aria-label="Windows Ink"><svg width="42" height="42" viewBox="0 0 42 42"><path d="M14 30L30 2l5 3-15 28-7 6zM22 20q-20 4-20 14 1 8 8 4l17-13q8-7 13-1-2 9-9 9" fill="none" stroke="#fff" stroke-width="2.500"/></svg></button>
        <button class="tray__lang">ENG</button>
        <button class="tray__clock"><span>2:24 PM</span><span>11/28/2021</span></button>
        <button class="tray__notes" aria-label="Notifications"><svg width="42" height="42" viewBox="0 0 42 42"><path d="M2 2h38v32H26l-5 6-5-6H2z" fill="none" stroke="#fff" stroke-width="2.500"/></svg></button>
        <span class="tray__desktop"></span>
      </div>
    </footer>

    <div class="dialog" role="dialog" aria-labelledby="dialog-title">
      <div class="dialog__title"><h1 id="dialog-title">NVIDIA OpenGL Driver</h1>
        <button aria-label="Close"><svg width="22" height="22"><path d="M1 1l20 20M21 1L1 21" stroke="#dedede" stroke-width="2"/></svg></button></div>
      <div class="dialog__body">
        <svg width="76" height="76" viewBox="0 0 76 76"><circle cx="38" cy="38" r="37" fill="#f03a17" stroke="#c62f12"/><path d="M20 20l36 36M56 20L20 56" stroke="#fff" stroke-width="5"/></svg>
        <p>Unable to communicate with the display driver.  The application
must close.


Error code: 2

Would you like to visit http://www.nvidia.com/page/support.html
for help?</p>
      </div>
      <div class="dialog__actions"><button>Yes</button><button>No</button></div>
    </div>

    <script src="script.js"></script>
  </body>
</html>
```
FILE: styles.css
```css
* {
  box-sizing: border-box;
}
body {
  margin: 0;
  height: 100vh;
  display: flex;
  flex-direction: column;
  overflow: hidden;
  background: #383838;
  color: #dcdcdc;
  font-family: "Open Sans", "Noto Sans", sans-serif;
  font-size: 23px;
}
button, input, select {
  margin: 0;
  padding: 0;
  border: 0;
  border-radius: 0;
  background: none;
  color: inherit;
  font: inherit;
}
button {
  display: flex;
  align-items: center;
  justify-content: center;
}
svg {
  display: block;
  flex: none;
}
.sprite {
  position: absolute;
  width: 0;
  height: 0;
}
.chevron {
  width: 24px;
  height: 24px;
}
.chevron--up {
  transform: rotate(180deg);
}
.chevron--dim {
  color: #777777;
}
.icon {
  width: 30px;
  height: 30px;
}
.is-dim {
  color: #9a9a9a;
}
.has-menu {
  position: relative;
}
/* small white arrow in the corner of menu buttons */
.has-menu::after {
  content: "";
  position: absolute;
  right: -4px;
  bottom: -4px;
  border: 5px solid transparent;
  border-top-color: #ffffff;
  border-bottom: 0;
}

/* Menu bar */
.menubar {
  display: flex;
  height: 62px;
  background: #535353;
  border-bottom: 2px solid #383838;
  color: #f0f0f0;
  font-size: 28px;
}
.menubar__logo {
  width: 36px;
  height: 36px;
  margin: 12px 22px 0 15px;
}
.menubar__items {
  display: flex;
  align-items: center;
}
.menubar__items button {
  padding: 0 16px 0 15px;
}
.window-controls {
  display: flex;
  height: 48px;
  margin-left: auto;
  margin-right: 8px;
  border: 2px solid #666666;
  border-top: 0;
  border-radius: 0 0 8px 8px;
}
.window-controls__button {
  width: 68px;
  border-right: 2px solid #666666;
}
.window-controls__button--wide {
  width: 116px;
  border-right: 0;
}

/* Options bar */
.options {
  display: flex;
  height: 85px;
  background: #535353;
  border-bottom: 3px solid #383838;
}
.options__group {
  display: flex;
  align-items: center;
  gap: 20px;
  padding: 0 20px;
  position: relative;
}
.options__group::after {
  content: "";
  position: absolute;
  right: 0;
  top: 12px;
  bottom: 12px;
  width: 2px;
  background: #424242;
}
.options__group--last::after {
  display: none;
}
.options__group--home {
  width: 135px;
  padding-left: 12px;
  gap: 28px;
}
.options__group--fields {
  gap: 34px;
  padding: 0 24px 0 20px;
}
.options__group--angle {
  gap: 12px;
  padding: 0 12px;
}
.options__grip {
  width: 8px;
  height: 46px;
  background: repeating-linear-gradient(#444444 0 2px, transparent 2px 6px);
}
.brush-size {
  width: 58px;
  display: flex;
  flex-direction: column;
  align-items: center;
  gap: 12px;
  padding-top: 16px;
  font-size: 24px;
  line-height: 30px;
}
.brush-size__dot {
  width: 15px;
  height: 15px;
  border-radius: 50%;
  background: #ffffff;
}
.options__preset {
  width: 56px;
}
.field {
  display: flex;
  align-items: center;
  gap: 16px;
}
.select {
  position: relative;
  height: 42px;
  display: flex;
  align-items: center;
  background: #434343;
  border: 2px solid #666666;
  border-radius: 6px;
  color: #f0f0f0;
}
.select select {
  width: 100%;
  height: 100%;
  padding-left: 18px;
  appearance: none;
}
.select .chevron {
  position: absolute;
  right: 4px;
}
.select--mode {
  width: 320px;
}
.combo {
  display: flex;
  width: 125px;
  height: 41px;
  background: #434343;
  border: 2px solid #666666;
  border-radius: 6px;
  color: #f0f0f0;
  font-size: 25px;
}
.combo input {
  width: 86px;
  padding-left: 9px;
}
.combo button {
  flex: 1;
  border-left: 2px solid #666666;
}
.angle {
  width: 88px;
  height: 42px;
  padding-left: 8px;
  background: #434343;
  border: 2px solid #666666;
  color: #f0f0f0;
  font-size: 25px;
}
.options__active {
  width: 60px;
  height: 64px;
  background: #383838;
  border: 2px solid #666666;
  border-radius: 6px;
}
.options__group--last {
  gap: 28px;
}
.options__right {
  display: flex;
  align-items: center;
  gap: 27px;
  margin-left: auto;
  padding-right: 24px;
}

/* Workspace */
.workspace {
  flex: 1;
  min-height: 0;
  display: flex;
  gap: 6px;
  padding-bottom: 2px;
  background: #3a3a3a;
}
.dock-head {
  display: flex;
  align-items: center;
  height: 30px;
  background: #434343;
  border-bottom: 2px solid #383838;
}
.dock-head--left {
  padding-left: 13px;
}
.dock-head--center {
  justify-content: flex-end;
  padding-right: 12px;
}
.dock-head--right {
  justify-content: flex-end;
  padding-right: 14px;
}
.grip {
  width: 48px;
  height: 10px;
  margin: 8px auto;
  background: repeating-linear-gradient(90deg, #414141 0 2px, transparent 2px 5px);
}
.toolbox {
  width: 97px;
  background: #535353;
}
.toolbox__tools {
  padding-top: 15px;
}
.tool {
  position: relative;
  width: 78px;
  height: 65px;
  margin-left: 11px;
}
.tool::after {
  content: "";
  position: absolute;
  right: 9px;
  bottom: 12px;
  border-left: 8px solid transparent;
  border-bottom: 6px solid #dcdcdc;
}
.tool--plain::after {
  display: none;
}
.tool--active {
  background: #383838;
  border: 2px solid #666666;
  border-radius: 6px;
}
.tool__icon {
  width: 40px;
  height: 40px;
}
.toolbox__colors {
  width: 96px;
  height: 120px;
  margin: 16px 0 2px;
}

/* Document window */
.document {
  flex: 1;
  min-width: 0;
  display: flex;
  flex-direction: column;
}
.document__tabs {
  height: 72px;
  background: #434343;
  border-bottom: 2px solid #383838;
}
.document__tab {
  display: inline-flex;
  align-items: center;
  gap: 22px;
  height: 70px;
  padding: 0 26px 0 24px;
  background: #535353;
  color: #f4f4f4;
  font-size: 27px;
  font-weight: 700;
  white-space: nowrap;
}
.document__body {
  flex: 1;
  min-height: 0;
  display: grid;
  grid-template-columns: 41px 1fr 41px;
  grid-template-rows: 43px 1fr;
}
.ruler-corner {
  background: #4f4f4f;
  border-right: 2px solid #444444;
  border-bottom: 2px solid #444444;
}
.ruler {
  width: 100%;
  height: 100%;
  background: #474747;
  fill: #a0a0a0;
  font-size: 26px;
}
.ruler path {
  stroke: #737373;
  stroke-width: 2px;
  fill: none;
}
.scroll-up {
  display: flex;
  align-items: center;
  justify-content: center;
  background: #4a4a4a;
}
.canvas {
  width: 100%;
  height: 100%;
  background: #edf6fd;
}
.canvas__rules {
  fill: none;
  stroke: #2173b0;
  stroke-width: 11px;
  filter: blur(1px);
}
.canvas__heading {
  font-family: "Roboto Condensed", Roboto, sans-serif;
  font-size: 93px;
  font-weight: 600;
  fill: #3f4a50;
  filter: blur(1px);
}
.canvas__body {
  font-family: "Roboto Condensed", Roboto, sans-serif;
  font-size: 74px;
  fill: #12161a;
  filter: blur(1px);
}
.canvas__ink {
  fill: none;
  stroke: #000000;
  stroke-width: 48px;
  stroke-linecap: round;
  stroke-linejoin: round;
}
.grid__solid {
  fill: none;
  stroke: #2c56a8;
  stroke-width: 1px;
  shape-rendering: crispEdges;
}
.grid__dotted {
  fill: none;
  stroke: #5f97d0;
  stroke-width: 1px;
  stroke-dasharray: 1 2;
  shape-rendering: crispEdges;
}
.vscroll {
  display: flex;
  flex-direction: column;
  align-items: center;
  justify-content: space-between;
  padding: 673px 0 14px;
  background: #4a4a4a;
}
.vscroll__thumb {
  width: 28px;
  height: 506px;
  background: #696969;
}
.status {
  display: flex;
  height: 40px;
  background: #4a4a4a;
  font-size: 24px;
}
.status > span {
  display: flex;
  align-items: center;
}
.status__zoom {
  width: 119px;
  padding-left: 8px;
  background: #434343;
  color: #f0f0f0;
  font-size: 25px;
}
.status__doc {
  width: 460px;
  justify-content: space-between;
  padding: 0 12px 0 110px;
  background: #535353;
}
.hscroll {
  flex: 1;
  display: flex;
  align-items: center;
  justify-content: space-between;
  padding: 0 18px;
}
.hscroll__thumb {
  width: 592px;
  height: 29px;
  margin-right: 252px;
  background: #696969;
}
.status__end {
  width: 41px;
  background: #535353;
}

/* Collapsed icon dock */
.dock {
  width: 94px;
  background: #535353;
}
.dock__group {
  padding-bottom: 6px;
  border-bottom: 4px solid #3d3d3d;
}
.dock__group .grip {
  margin-bottom: 0;
}
.dock__button {
  width: 94px;
  height: 73px;
}

/* Panels */
.panels {
  width: 751px;
  display: flex;
  flex-direction: column;
}
.panel {
  background: #535353;
}
.panel--layers {
  flex: 1;
  display: flex;
  flex-direction: column;
  margin-top: 6px;
}
.tabs {
  display: flex;
  height: 70px;
  background: #434343;
}
.tabs__tab {
  height: 70px;
  padding: 0 21px 8px;
  border-right: 2px solid #383838;
  border-bottom: 2px solid #383838;
  color: #a8a8a8;
  font-weight: 700;
}
.tabs__tab--active {
  padding-left: 22px;
  background: #535353;
  border-bottom-color: #535353;
  color: #f4f4f4;
}
.tabs__menu {
  width: 26px;
  height: 18px;
  margin: 27px 15px 0 auto;
  background: repeating-linear-gradient(#b5b5b5 0 3px, transparent 3px 5px);
}
.swatch-search {
  display: flex;
  align-items: center;
  gap: 8px;
  padding: 25px 22px 24px 20px;
}
.swatch-search label {
  width: 29px;
}
.swatch-search input {
  flex: 1;
  height: 54px;
  padding-left: 8px;
  background: #434343;
  border: 2px solid #666666;
  font-size: 29px;
}
.swatch-search input::placeholder {
  color: #969696;
  opacity: 1;
}
.recent {
  display: flex;
  gap: 5px;
  padding: 0 0 20px 20px;
  border-bottom: 2px solid #3f3f3f;
}
.swatch {
  width: 40px;
  height: 40px;
}
.swatches {
  display: flex;
  height: 450px;
  padding: 6px 0 0 5px;
  overflow: hidden;
  background: #4a4a4a;
  border-bottom: 2px solid #3f3f3f;
}
.swatches__grid {
  display: grid;
  grid-template-columns: repeat(15, 40px);
  grid-auto-rows: 40px;
  gap: 5px;
}
.swatches__scroll {
  display: flex;
  flex-direction: column;
  align-items: center;
  width: 44px;
  margin-left: auto;
  padding: 10px 0 14px;
}
.swatches__thumb {
  width: 29px;
  height: 122px;
  margin: 6px 0 auto;
  background: #696969;
}
.swatch-footer {
  display: flex;
  align-items: center;
  justify-content: flex-end;
  gap: 42px;
  height: 60px;
  padding-right: 73px;
}
.layer-row {
  display: flex;
  align-items: center;
  height: 72px;
  padding-left: 10px;
  border-bottom: 3px solid #434343;
}
.layer-row--filter {
  height: 80px;
  padding-top: 9px;
}
.select--kind {
  width: 216px;
}
.select--kind select {
  padding-left: 54px;
}
.select__search {
  position: absolute;
  left: 18px;
  width: 28px;
  height: 28px;
}
.filters {
  display: flex;
  width: 300px;
  margin-left: 15px;
}
.filters button {
  width: 60px;
}
.toggle {
  display: flex;
  margin-left: 15px;
}
.toggle input {
  appearance: none;
  width: 22px;
  height: 46px;
  margin: 0;
  background: #434343;
  border: 2px solid #666666;
  border-radius: 11px;
}
.toggle input::before {
  content: "";
  display: block;
  width: 20px;
  height: 20px;
  margin-left: -1px;
  border-radius: 50%;
  background: #dcdcdc;
}
.select--blend {
  width: 322px;
}
.field--panel {
  justify-content: flex-end;
  width: 243px;
  gap: 12px;
}
.layer-row--lock {
  height: 75px;
  padding-left: 16px;
}
.locks {
  display: flex;
  width: 316px;
  padding-left: 14px;
}
.locks button {
  width: 55px;
}
.layer-row--lock .field--panel {
  margin-left: auto;
  margin-right: 175px;
}
.layers {
  flex: 1;
  margin: 0;
  padding: 0;
  list-style: none;
  background: #4a4a4a;
}
.layer {
  display: flex;
  width: 708px;
  height: 70px;
  border-bottom: 3px solid #434343;
  background: #535353;
}
.layer__eye {
  width: 76px;
  border-right: 2px solid #434343;
}
.layer__main {
  flex: 1;
  display: flex;
  align-items: center;
  padding-left: 5px;
  color: #f4f4f4;
}
.layer--active .layer__main {
  background: #6a6a6a;
}
.layer__frame {
  width: 90px;
  height: 58px;
  margin-right: 19px;
  padding: 5px;
}
/* white corner brackets round the selected thumbnail */
.layer--active .layer__frame {
  background:
    linear-gradient(#fff, #fff) 0 0 / 32px 2px,
    linear-gradient(#fff, #fff) 0 0 / 2px 18px,
    linear-gradient(#fff, #fff) 100% 0 / 32px 2px,
    linear-gradient(#fff, #fff) 100% 0 / 2px 18px,
    linear-gradient(#fff, #fff) 0 100% / 32px 2px,
    linear-gradient(#fff, #fff) 0 100% / 2px 18px,
    linear-gradient(#fff, #fff) 100% 100% / 32px 2px,
    linear-gradient(#fff, #fff) 100% 100% / 2px 18px;
  background-repeat: no-repeat;
}
.layer__thumb {
  width: 80px;
  height: 48px;
  border: 2px solid #2b2b2b;
}
.layer__thumb--empty {
  background: repeating-conic-gradient(#cccccc 0 25%, #ffffff 0 50%) 0 0 / 8px 8px;
}
.layer__lock {
  margin-left: auto;
  margin-right: 38px;
}
.layer-footer {
  display: flex;
  align-items: center;
  justify-content: flex-end;
  gap: 8px;
  height: 61px;
  padding-right: 56px;
  border-top: 3px solid #3f3f3f;
}
.layer-footer button {
  width: 60px;
  height: 30px;
}
.layer-footer .has-menu::after {
  right: 6px;
  bottom: -6px;
}
.fx {
  font-size: 29px;
  font-style: italic;
}

/* Taskbar */
.taskbar {
  display: flex;
  height: 100px;
  background: #1f2b38;
  color: #ffffff;
  font-size: 28px;
}
.taskbar__start {
  width: 120px;
}
.taskbar__search {
  display: flex;
  align-items: center;
  gap: 30px;
  width: 860px;
  padding-left: 28px;
  background: #f1f1f1;
  border: 3px solid #bdbfc1;
}
.taskbar__search input {
  flex: 1;
  height: 90px;
  color: #2b2b2b;
  font-size: 35px;
}
.taskbar__search input::placeholder {
  color: #2b2b2b;
  opacity: 1;
}
.taskbar__apps {
  display: flex;
  padding-left: 6px;
}
.app {
  position: relative;
  width: 120px;
  height: 100px;
}
.app:first-child {
  margin-left: -6px;
  margin-right: 6px;
}
.app__clip {
  overflow: hidden;
}
.app--open::after {
  content: "";
  position: absolute;
  left: 12px;
  right: 12px;
  bottom: 0;
  height: 5px;
  background: #76b9ed;
}
.app--active {
  width: 112px;
  background: #4b5761;
}
.app--active::after {
  left: 0;
  right: 0;
}
.tray {
  display: flex;
  align-items: center;
  margin-left: auto;
}
.tray__icon {
  width: 81px;
  height: 100px;
}
.tray__lang {
  width: 90px;
  height: 100px;
  margin-left: 12px;
}
.tray__clock {
  flex-direction: column;
  width: 164px;
  line-height: 47px;
}
.tray__notes {
  width: 108px;
  height: 100px;
}
.tray__desktop {
  width: 12px;
  height: 100px;
  margin-left: 16px;
  border-left: 2px solid #6b747c;
}

/* Message box */
.dialog {
  position: absolute;
  left: 1399px;
  top: 766px;
  width: 1078px;
  background: #ffffff;
  border: 1px solid #8d9499;
  box-shadow: 0 4px 16px rgba(0, 0, 0, 0.3);
  color: #000000;
  font-size: 28px;
}
.dialog__title {
  display: flex;
  align-items: center;
  justify-content: space-between;
  height: 70px;
  padding: 0 31px 0 17px;
}
.dialog__title h1 {
  margin: 0;
  color: #999999;
  font-size: 28px;
  font-weight: 400;
}
.dialog__body {
  display: flex;
  align-items: flex-start;
  gap: 22px;
  height: 460px;
  padding: 72px 0 0 58px;
}
.dialog__body p {
  margin: 0;
  font-size: 27px;
  line-height: 40px;
  white-space: pre;
}
.dialog__actions {
  display: flex;
  justify-content: flex-end;
  gap: 22px;
  height: 130px;
  padding: 21px 53px 0;
  background: #eeeeee;
}
.dialog__actions button {
  width: 198px;
  height: 68px;
  background: #e1e1e1;
  border: 1px solid #adadad;
}
```
FILE: script.js
```js
const STEP = 97.4; // one ruler unit in screen pixels
const SVG = "http://www.w3.org/2000/svg";

const addPath = (parent, d, className) => {
  const path = document.createElementNS(SVG, "path");
  path.setAttribute("d", d);
  if (className) path.setAttribute("class", className);
  parent.appendChild(path);
};

const addText = (parent, x, y, content) => {
  const text = document.createElementNS(SVG, "text");
  text.setAttribute("x", x);
  text.setAttribute("y", y);
  text.textContent = content;
  parent.appendChild(text);
};

// rulers: long tick per unit, shorter ones for halves and quarters
const rulerTop = document.querySelector("#ruler-top");
let ticks = "";
for (let i = 0; i < 118; i++) {
  const x = Math.round(-15 + (i * STEP) / 4);
  const top = i % 4 === 0 ? 0 : i % 2 === 0 ? 29 : 35;
  ticks += `M${x} ${top}V42`;
  if (i % 4 === 0) addText(rulerTop, x + 2, 35, 6 + i / 4);
}
addPath(rulerTop, ticks);

const rulerLeft = document.querySelector("#ruler-left");
ticks = "";
for (let i = -2; i < 72; i++) {
  const y = Math.round(54 + (i * STEP) / 4);
  const left = i % 4 === 0 ? 0 : i % 2 === 0 ? 27 : 32;
  ticks += `M${left} ${y}H39`;
  if (i % 4 === 0) {
    String(9 + i / 4).split("").forEach((digit, n) => addText(rulerLeft, 3, y + 29 + n * 30, digit));
  }
}
addPath(rulerLeft, ticks);

// page grid: solid line every half unit, dotted in between
const grid = document.querySelector("#grid");
let solid = "";
let dotted = "";
for (let i = -1; i < 118; i++) {
  const x = Math.round(173 + (i * STEP) / 4);
  if (i % 2 === 0) solid += `M${x}.5 262V2018`;
  else dotted += `M${x}.5 262V2018`;
}
for (let i = 0; i < 73; i++) {
  const y = Math.round(264 + (i * STEP) / 4);
  if (i % 2 === 0) solid += `M144 ${y}.5H2960`;
  else dotted += `M144 ${y}.5H2960`;
}
addPath(grid, dotted, "grid__dotted");
addPath(grid, solid, "grid__solid");

const recent = "000 f0f bd8cbf 0f0 ec008c 7a0026 ee1d24 00aeef f7941d 000 fff200 a0410d 1cbbb4 fff 0ff";

const swatches = `
f00 f59679 0f0 fff 00f f0f ebebeb d7d7d7 c2c2c2 acacac 464646 0ff bbaa9f ee1d24 535451
e1e1e1 00adee 00a650 00adef ccc ff0 2e3192 959595 a0a0a0 898989 7d7d7d 707070 b7b7b7 e5d389 fcaf5e
fff200 f7941d 626262 464646 363636 262626 111 ec008c 000 fbad82 fdc689 fff799 c4df9b c4e29c a3d49c
7accc8 4a5c43 8393ca 8781bd a186be bd8cbf f49ac1 f5989d f26c4f f68e56 82ca9c fff568 acd373 7cc576 6dcff6
7da7d9 f7941d 3cb878 1cbbb4 39b54a 00bff3 0076a3 c7b8ad 448ccb 5574b9 605ca8 855fa8 a763a8 f06eaa f26d7d
ed1c24 a0410d f26522 fff200 8dc63f 00a651 00a99d 00aeef 0072bc 00746b 0054a6 2e3192 662d91 92278f ec008c
ed145b 9e0b0f a36209 aba000 598527 1a7b30 007236 004b80 003471 1b1464 440e62 630460 9e005d 9e0039 790000
7b2e00 7d4900 827b00 998675 406618 736357 005e20 005826 005952 005b7f 003663 002157 8c6239 754c24 0d004c
32004b 4b0049 7b0046 8f9f66 7a0026 c7b299 534741 37302d 8c7b70 c69c6d d7d7d7 d7d7d7 a67c52 603913 ae9b8a
dce3c1 8faa5f 90a070 c4d2b4 998f94 4a4327 695724 c7b299 362f2d 758058 636c46 c7b299 a0410d fbe176 8bc34a`;

const fillSwatches = (selector, colors) => {
  document.querySelector(selector).innerHTML = colors
    .trim()
    .split(/\s+/)
    .map((color) => `<button class="swatch" style="background:#${color}" aria-label="#${color}"></button>`)
    .join("");
};

fillSwatches("#recent", recent);
fillSwatches("#swatches", swatches);
```
